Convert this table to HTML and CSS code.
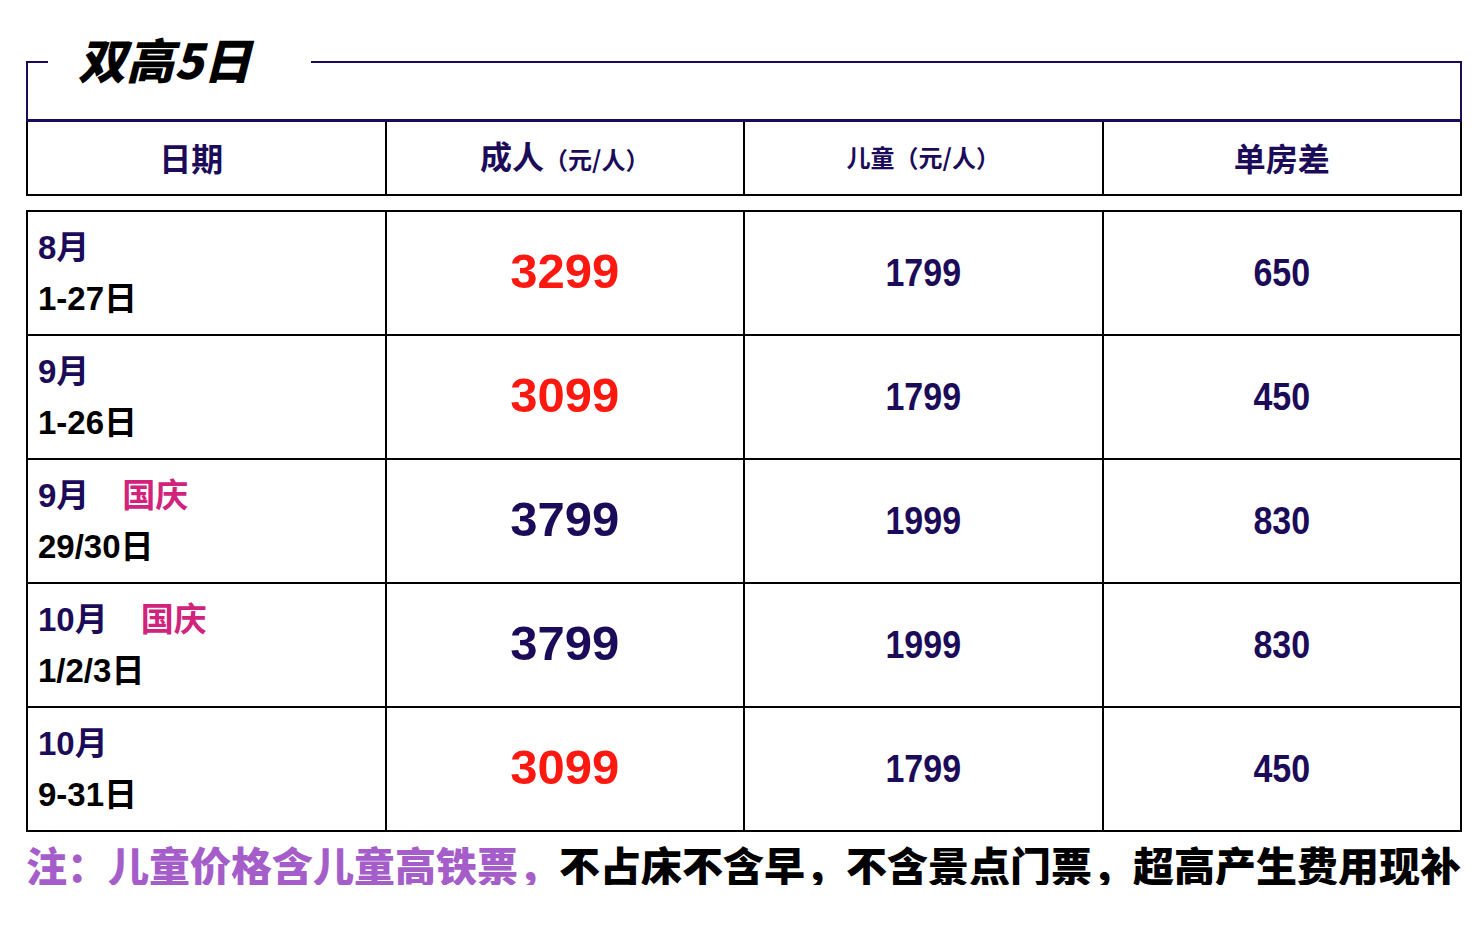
FILE: index.html
```html
<!DOCTYPE html>
<html lang="zh-CN">
<head>
<meta charset="utf-8">
<title>双高5日</title>
<link rel="stylesheet" href="styles.css">
</head>
<body>
<div class="page">
  <fieldset class="frame">
    <legend class="title">双高5日</legend>
    <div class="frame-space"></div>
  </fieldset>

  <table class="head">
    <colgroup><col><col><col><col></colgroup>
    <tr>
      <th class="first"><span class="big">日期</span></th>
      <th><span class="big">成人</span><span class="small">（元/人）</span></th>
      <th><span class="small">儿童（元/人）</span></th>
      <th><span class="big">单房差</span></th>
    </tr>
  </table>

  <table class="prices">
    <colgroup><col><col><col><col></colgroup>
    <tr>
      <td class="date"><div class="mon">8月</div><div class="day">1-27日</div></td>
      <td class="adult red">3299</td>
      <td class="num"><span>1799</span></td>
      <td class="num"><span>650</span></td>
    </tr>
    <tr>
      <td class="date"><div class="mon">9月</div><div class="day">1-26日</div></td>
      <td class="adult red">3099</td>
      <td class="num"><span>1799</span></td>
      <td class="num"><span>450</span></td>
    </tr>
    <tr>
      <td class="date"><div class="mon">9月　<span class="hol">国庆</span></div><div class="day">29/30日</div></td>
      <td class="adult navy">3799</td>
      <td class="num"><span>1999</span></td>
      <td class="num"><span>830</span></td>
    </tr>
    <tr>
      <td class="date"><div class="mon">10月　<span class="hol">国庆</span></div><div class="day">1/2/3日</div></td>
      <td class="adult navy">3799</td>
      <td class="num"><span>1999</span></td>
      <td class="num"><span>830</span></td>
    </tr>
    <tr>
      <td class="date"><div class="mon">10月</div><div class="day">9-31日</div></td>
      <td class="adult red">3099</td>
      <td class="num"><span>1799</span></td>
      <td class="num"><span>450</span></td>
    </tr>
  </table>

  <p class="note"><span class="purple">注：儿童价格含儿童高铁票，</span>不占床不含早，不含景点门票，超高产生费用现补</p>
</div>
</body>
</html>
```

FILE: styles.css
```css
html, body {
  margin: 0;
  padding: 0;
  background: #ffffff;
}

body {
  font-family: "Liberation Sans", "Noto Sans CJK SC", sans-serif;
  color: #000000;
}

.page {
  width: 1436px;
  padding: 38px 0 0 26px;
}

/* ---- title frame ---- */
.frame {
  margin: 0;
  padding: 0;
  min-width: 0;
  width: 1436px;
  box-sizing: border-box;
  border: 2px solid #1c0b58;
  border-bottom-width: 3px;
}

.title {
  margin-left: 20px;
  padding: 0 60px 7px 30px;
  font-family: "Noto Sans CJK SC", sans-serif;
  font-size: 48px;
  line-height: 41px;
  font-weight: 900;
  font-style: italic;
  color: #000000;
}

.frame-space {
  height: 33px;
}

/* ---- tables ---- */
.head,
.prices {
  width: 1436px;
  border-collapse: collapse;
  table-layout: fixed;
}

.head col,
.prices col {
  width: 25%;
}

.head th {
  height: 69px;
  padding: 0 0 3px;
  border: 2px solid #000000;
  border-top: none;
  text-align: center;
  vertical-align: middle;
  color: #1c0b58;
  font-family: "Noto Sans CJK SC", sans-serif;
  font-weight: 700;
  white-space: nowrap;
}

.head th.first {
  padding-right: 30px;
}

.head .big {
  font-size: 32px;
  line-height: 40px;
}

.head .small {
  font-size: 24px;
  line-height: 40px;
}

.prices {
  margin-top: 14px;
}

.prices td {
  height: 122px;
  padding: 0;
  border: 2px solid #000000;
  vertical-align: middle;
  text-align: center;
  font-weight: 700;
}

.prices .date {
  text-align: left;
  padding-left: 10px;
  font-size: 33px;
  line-height: 51px;
  white-space: nowrap;
}

.mon {
  color: #1c0b58;
}

.hol {
  color: #d1237c;
}

.day {
  color: #000000;
}

.prices .adult {
  height: 117px;
  padding-bottom: 5px;
  font-size: 49px;
  line-height: 56px;
}

.red {
  color: #fd1810;
}

.navy {
  color: #1c0b58;
}

.num {
  color: #1c0b58;
  font-size: 34px;
}

.num span {
  display: inline-block;
  transform: scaleY(1.12);
}

/* ---- note ---- */
.note {
  margin: 12px 0 0;
  font-family: "Noto Sans CJK SC", sans-serif;
  font-size: 41px;
  line-height: 41px;
  font-weight: 900;
  white-space: nowrap;
  color: #000000;
}

.purple {
  color: #a55ec9;
}
```
